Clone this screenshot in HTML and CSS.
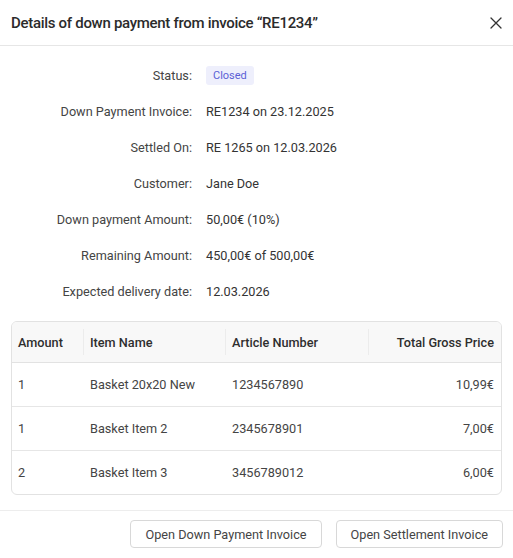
FILE: index.html
```html
<!DOCTYPE html>
<html>
  <head>
    <title>Down Payment Details</title>
    <link rel="stylesheet" href="styles.css">
  </head>
  <body>
    <div class="dialog">
      <div class="dialog-header">
        <div class="dialog-title">Details of down payment from invoice “RE1234”</div>
        <button class="close-btn" aria-label="Close">
          <svg width="12" height="12" viewBox="0 0 12 12">
            <path d="M1 1 L11 11 M11 1 L1 11" stroke="#333" stroke-width="1.3" stroke-linecap="round" fill="none"/>
          </svg>
        </button>
      </div>

      <div class="details">
        <div class="label">Status:</div>
        <div class="value"><span class="badge">Closed</span></div>

        <div class="label">Down Payment Invoice:</div>
        <div class="value">RE1234 on 23.12.2025</div>

        <div class="label">Settled On:</div>
        <div class="value">RE 1265 on 12.03.2026</div>

        <div class="label">Customer:</div>
        <div class="value">Jane Doe</div>

        <div class="label">Down payment Amount:</div>
        <div class="value">50,00€ (10%)</div>

        <div class="label">Remaining Amount:</div>
        <div class="value">450,00€ of 500,00€</div>

        <div class="label">Expected delivery date:</div>
        <div class="value">12.03.2026</div>
      </div>

      <div class="table-wrap">
        <table class="items">
          <thead>
            <tr>
              <th class="col-amount">Amount</th>
              <th class="col-name">Item Name</th>
              <th class="col-article">Article Number</th>
              <th class="col-price">Total Gross Price</th>
            </tr>
          </thead>
          <tbody>
            <tr>
              <td>1</td>
              <td>Basket 20x20 New</td>
              <td>1234567890</td>
              <td class="num">10,99€</td>
            </tr>
            <tr>
              <td>1</td>
              <td>Basket Item 2</td>
              <td>2345678901</td>
              <td class="num">7,00€</td>
            </tr>
            <tr>
              <td>2</td>
              <td>Basket Item 3</td>
              <td>3456789012</td>
              <td class="num">6,00€</td>
            </tr>
          </tbody>
        </table>
      </div>

      <div class="dialog-footer">
        <button class="btn">Open Down Payment Invoice</button>
        <button class="btn">Open Settlement Invoice</button>
      </div>
    </div>
  </body>
</html>
```

FILE: styles.css
```css
body {
  margin: 0;
  background: #ffffff;
  font-family: Roboto, "Liberation Sans", sans-serif;
  color: #333333;
}

.dialog {
  width: 513px;
}

.dialog-header {
  height: 45px;
  padding: 0 10px 0 11px;
  display: flex;
  align-items: center;
  justify-content: space-between;
  border-bottom: 1px solid #e6e6e6;
}

.dialog-title {
  font-size: 15px;
  font-weight: 500;
  letter-spacing: -0.3px;
  color: #2b2b2b;
}

.close-btn {
  background: none;
  border: none;
  padding: 0;
  width: 14px;
  height: 14px;
  display: flex;
  align-items: center;
  justify-content: center;
  cursor: pointer;
}

.details {
  display: grid;
  grid-template-columns: 192px 1fr;
  grid-auto-rows: 36px;
  column-gap: 14px;
  padding-top: 11px;
  font-size: 12.7px;
}

.label {
  text-align: right;
  color: #444444;
  display: flex;
  align-items: center;
  justify-content: flex-end;
}

.value {
  display: flex;
  align-items: center;
  color: #333333;
}

.badge {
  display: inline-block;
  height: 19px;
  line-height: 19px;
  padding: 0 7px;
  font-size: 11px;
  color: #5b5fd6;
  background: #eeeffc;
  border-radius: 3px;
}

.table-wrap {
  margin: 12px 11px 0;
  border: 1px solid #e2e2e2;
  border-radius: 6px;
  overflow: hidden;
}

.items {
  width: 100%;
  border-collapse: collapse;
  font-size: 12.7px;
  color: #444444;
}

.items th {
  height: 40px;
  background: #f8f8f8;
  font-weight: 500;
  color: #2e2e2e;
  text-align: left;
  padding: 0 7px 0 6px;
  border-bottom: 1px solid #e2e2e2;
  position: relative;
}

.items th + th {
  padding-left: 7px;
}

.items th + th::before {
  content: "";
  position: absolute;
  left: 0;
  top: 7px;
  bottom: 7px;
  border-left: 1px solid #ececec;
}

.items td {
  height: 43px;
  padding: 0 7px;
  border-bottom: 1px solid #e6e6e6;
}

.items td:first-child {
  padding-left: 6px;
}

.items tbody tr:last-child td {
  border-bottom: none;
}

.col-amount { width: 58px; }
.col-name { width: 128px; }
.col-article { width: 129px; }

.items .col-price,
.items .num {
  text-align: right;
}

.dialog-footer {
  margin-top: 15px;
  border-top: 1px solid #ededed;
  padding: 9px 10px 0 0;
  display: flex;
  justify-content: flex-end;
  gap: 14px;
}

.btn {
  height: 28px;
  padding: 0 14px;
  font-family: Roboto, "Liberation Sans", sans-serif;
  font-size: 12.7px;
  color: #444444;
  background: #ffffff;
  border: 1px solid #d8d8d8;
  border-radius: 4px;
  cursor: pointer;
}
```
